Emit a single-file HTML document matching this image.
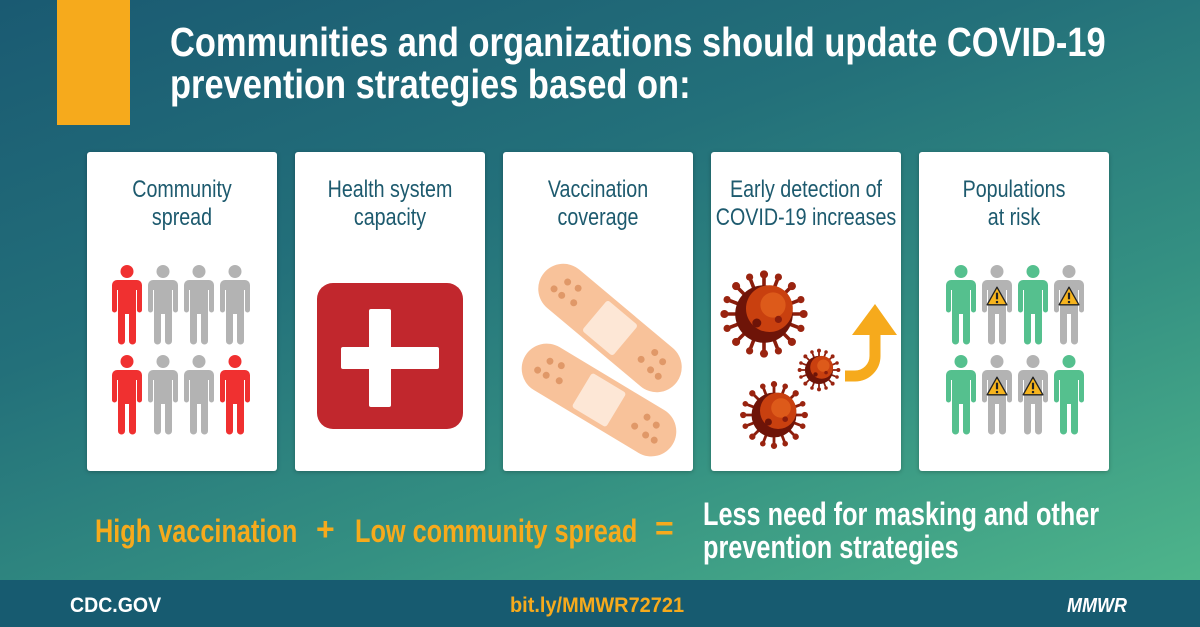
<!DOCTYPE html>
<html><head><meta charset="utf-8"><style>
*{margin:0;padding:0;box-sizing:border-box}
body{width:1200px;height:627px;overflow:hidden;position:relative;font-family:"Liberation Sans",sans-serif;background:linear-gradient(160deg,#1a5a72 0%,#23707a 35%,#349082 65%,#52ba8c 100%)}
.abs{position:absolute}
.t{white-space:nowrap;transform-origin:0 0;font-weight:bold}
.card{position:absolute;top:152px;width:190px;height:319px;background:#fff;border-radius:3px;box-shadow:0 1px 4px rgba(0,0,0,.25)}
.ct{position:absolute;top:24px;text-align:center;color:#1d5a6e;font-size:24px;line-height:28px;transform:scaleX(.82);transform-origin:50% 0;white-space:nowrap;left:-20%;width:140%}
</style></head><body>
<div class="abs" style="left:57px;top:0;width:73px;height:125px;background:#f6aa1c"></div>
<div class="abs t" style="left:170px;top:21px;color:#fff;font-size:41px;line-height:42px;transform:scaleX(.84)">Communities and organizations should update COVID-19<br>prevention strategies based on:</div>

<svg width="0" height="0" style="position:absolute"><defs>
<symbol id="p" viewBox="0 0 32 80"><circle cx="16" cy="6.5" r="6.5"/><path d="M6 15H26A5 5 0 0 1 31 20V45A2.5 2.5 0 0 1 26 45V25H25V76A3.5 3.5 0 0 1 18 76V49H14V76A3.5 3.5 0 0 1 7 76V25H6V45A2.5 2.5 0 0 1 1 45V20A5 5 0 0 1 6 15Z"/></symbol>
<symbol id="w" viewBox="0 0 20 18"><path d="M10 1L19 17H1Z" fill="#f6b41e" stroke="#222" stroke-width="1.2" stroke-linejoin="round"/><rect x="9" y="6" width="2" height="6" fill="#222"/><rect x="9" y="13.5" width="2" height="2" fill="#222"/></symbol>
<symbol id="v" viewBox="-50 -50 100 100"><g stroke="#8a1d0c" stroke-width="4" stroke-linecap="round"><path d="M0-30V-44M21-21L31-31M30 0H44M21 21L31 31M0 30V44M-21 21L-31 31M-30 0H-44M-21-21L-31-31M11-28L16-41M28-11L41-16M28 11L41 16M11 28L16 41M-11 28L-16 41M-28 11L-41 16M-28-11L-41-16M-11-28L-16-41"/></g><g fill="#9a2410"><circle cx="0" cy="-44" r="4.5"/><circle cx="31" cy="-31" r="4.5"/><circle cx="44" cy="0" r="4.5"/><circle cx="31" cy="31" r="4.5"/><circle cx="0" cy="44" r="4.5"/><circle cx="-31" cy="31" r="4.5"/><circle cx="-44" cy="0" r="4.5"/><circle cx="-31" cy="-31" r="4.5"/><circle cx="16" cy="-41" r="4"/><circle cx="41" cy="-16" r="4"/><circle cx="41" cy="16" r="4"/><circle cx="16" cy="41" r="4"/><circle cx="-16" cy="41" r="4"/><circle cx="-41" cy="16" r="4"/><circle cx="-41" cy="-16" r="4"/><circle cx="-16" cy="-41" r="4"/></g><circle r="32" fill="#6e1408"/><circle cx="6" cy="-6" r="26" fill="#c9400f"/><circle cx="10" cy="-10" r="14" fill="#dd5a1a"/><circle cx="-8" cy="10" r="5" fill="#6e1408"/><circle cx="16" cy="6" r="4" fill="#8a1d0c"/></symbol>
</defs></svg>

<div class="card" style="left:87px"><div class="ct">Community<br>spread</div>
<svg class="abs" style="left:0;top:0" width="190" height="319">
<g fill="#f03030"><use href="#p" x="24" y="113" width="32" height="80"/><use href="#p" x="24" y="203" width="32" height="80"/><use href="#p" x="132" y="203" width="32" height="80"/></g>
<g fill="#b3b3b3"><use href="#p" x="60" y="113" width="32" height="80"/><use href="#p" x="96" y="113" width="32" height="80"/><use href="#p" x="132" y="113" width="32" height="80"/><use href="#p" x="60" y="203" width="32" height="80"/><use href="#p" x="96" y="203" width="32" height="80"/></g>
</svg></div>

<div class="card" style="left:295px"><div class="ct">Health system<br>capacity</div>
<svg class="abs" style="left:0;top:0" width="190" height="319"><rect x="22" y="131" width="146" height="146" rx="16" fill="#c1272d"/><rect x="74" y="157" width="22" height="98" rx="2" fill="#fff"/><rect x="46" y="195" width="98" height="22" rx="2" fill="#fff"/></svg></div>

<div class="card" style="left:503px"><div class="ct">Vaccination<br>coverage</div>
<svg class="abs" style="left:0;top:0" width="190" height="319">
<g transform="translate(107,176) rotate(40)"><rect x="-86" y="-25" width="172" height="50" rx="25" fill="#f8c29a"/><rect x="-20" y="-20" width="40" height="40" rx="3" fill="#fde7d6"/><g fill="#e09868"><circle cx="-62" cy="-8" r="3.5"/><circle cx="-50" cy="-10" r="3.5"/><circle cx="-58" cy="6" r="3.5"/><circle cx="-44" cy="4" r="3.5"/><circle cx="-68" cy="6" r="3.5"/><circle cx="62" cy="-8" r="3.5"/><circle cx="50" cy="-10" r="3.5"/><circle cx="58" cy="6" r="3.5"/><circle cx="44" cy="4" r="3.5"/><circle cx="68" cy="6" r="3.5"/></g></g>
<g transform="translate(96,248) rotate(31)"><rect x="-86" y="-25" width="172" height="50" rx="25" fill="#f8c29a"/><rect x="-20" y="-20" width="40" height="40" rx="3" fill="#fde7d6"/><g fill="#e09868"><circle cx="-62" cy="-8" r="3.5"/><circle cx="-50" cy="-10" r="3.5"/><circle cx="-58" cy="6" r="3.5"/><circle cx="-44" cy="4" r="3.5"/><circle cx="-68" cy="6" r="3.5"/><circle cx="62" cy="-8" r="3.5"/><circle cx="50" cy="-10" r="3.5"/><circle cx="58" cy="6" r="3.5"/><circle cx="44" cy="4" r="3.5"/><circle cx="68" cy="6" r="3.5"/></g></g>
</svg></div>

<div class="card" style="left:711px"><div class="ct">Early detection of<br>COVID-19 increases</div>
<svg class="abs" style="left:0;top:0" width="190" height="319">
<use href="#v" x="8" y="117" width="90" height="90"/><use href="#v" x="86" y="196" width="44" height="44"/><use href="#v" x="28" y="228" width="70" height="70"/>
<path d="M134 224H144A20 20 0 0 0 164 204V180" fill="none" stroke="#f6aa1c" stroke-width="11"/><path d="M141 183L164 152L186 183Z" fill="#f6aa1c"/>
</svg></div>

<div class="card" style="left:919px"><div class="ct">Populations<br>at risk</div>
<svg class="abs" style="left:0;top:0" width="190" height="319">
<g fill="#55c08e"><use href="#p" x="26" y="113" width="32" height="80"/><use href="#p" x="98" y="113" width="32" height="80"/><use href="#p" x="26" y="203" width="32" height="80"/><use href="#p" x="134" y="203" width="32" height="80"/></g>
<g fill="#b3b3b3"><use href="#p" x="62" y="113" width="32" height="80"/><use href="#p" x="134" y="113" width="32" height="80"/><use href="#p" x="62" y="203" width="32" height="80"/><use href="#p" x="98" y="203" width="32" height="80"/></g>
<use href="#w" x="67" y="134" width="22" height="20"/><use href="#w" x="139" y="134" width="22" height="20"/><use href="#w" x="67" y="224" width="22" height="20"/><use href="#w" x="103" y="224" width="22" height="20"/>
</svg></div>

<div class="abs t" style="left:95px;top:513px;color:#f6aa1c;font-size:32px;transform:scaleX(.79)">High vaccination</div>
<div class="abs t" style="left:316px;top:511px;color:#f6aa1c;font-size:32px">+</div>
<div class="abs t" style="left:355px;top:513px;color:#f6aa1c;font-size:32px;transform:scaleX(.79)">Low community spread</div>
<div class="abs t" style="left:655px;top:510px;color:#f6aa1c;font-size:32px">=</div>
<div class="abs t" style="left:703px;top:498px;color:#fff;font-size:32px;line-height:33px;transform:scaleX(.79)">Less need for masking and other<br>prevention strategies</div>

<div class="abs" style="left:0;top:580px;width:1200px;height:47px;background:#175b70"></div>
<div class="abs t" style="left:70px;top:594px;color:#fff;font-size:21px;transform:scaleX(.93)">CDC.GOV</div>
<div class="abs t" style="left:510px;top:594px;color:#f6aa1c;font-size:21px;transform:scaleX(.95)">bit.ly/MMWR72721</div>
<div class="abs t" style="left:1067px;top:595px;color:#fff;font-size:20px;font-style:italic;transform:scaleX(.9)">MMWR</div>
</body></html>
